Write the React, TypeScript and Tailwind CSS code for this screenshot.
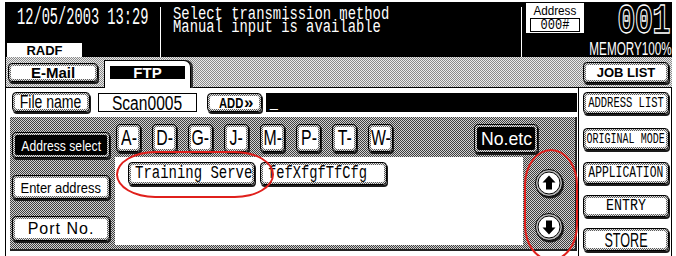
import type { ReactNode } from "react";

const BEVEL = "bg-[image:repeating-conic-gradient(#5a5a5a_0_25%,#e4e4e4_0_50%)] bg-[length:2px_2px]";
const PANEL = "bg-[image:repeating-conic-gradient(#3e3e3e_0_25%,#d2d2d2_0_50%)] bg-[length:2px_2px]";
const STRIP = "bg-[image:repeating-conic-gradient(#8a8a8a_0_25%,#ececec_0_50%)] bg-[length:2px_2px]";

function Key({ className = "", dark = false, start = false, children }: { className?: string; dark?: boolean; start?: boolean; children: ReactNode }) {
  return (
    <div className={"flex shrink-0 rounded-[4px] border border-black p-[2px] shadow-[1px_2px_0_#1a1a1a] " + BEVEL + " " + className}>
      <div
        className={
          "flex min-w-0 flex-1 items-center overflow-visible rounded-[2px] " +
          (start ? "justify-start " : "justify-center ") +
          (dark ? "bg-black text-white" : "bg-white text-black")
        }
      >
        {children}
      </div>
    </div>
  );
}

function RoundArrow({ down = false }: { down?: boolean }) {
  return (
    <svg width="31" height="31" viewBox="0 0 31 31">
      <circle cx="16" cy="16.5" r="14" fill="#1a1a1a" />
      <circle cx="15" cy="15" r="13.5" fill="#b8b8b8" stroke="black" strokeWidth="1" />
      <circle cx="15" cy="15" r="11" fill="white" stroke="black" strokeWidth="1" />
      <path
        d={down ? "M15 22.5 L21.5 15.5 H18 V8.5 H12 V15.5 H8.5 Z" : "M15 7.5 L21.5 14.5 H18 V21.5 H12 V14.5 H8.5 Z"}
        fill="black"
      />
    </svg>
  );
}

const LETTERS = ["A-", "D-", "G-", "J-", "M-", "P-", "T-", "W-"];

export default function App() {
  return (
    <div className="relative h-[256px] w-[676px] overflow-hidden bg-white pl-[5px] pt-[2px] font-['Liberation_Sans',sans-serif] text-black">
      <div className="flex h-[254px] w-[667px] flex-col">
        {/* status header */}
        <div className="flex h-[55px] shrink-0 bg-black text-white">
          <div className="flex w-[155px] flex-col justify-between">
            <div className="pl-[12px] pt-[6px] font-['Liberation_Mono',monospace] text-[24px] leading-[20px]">
              <span className="inline-block origin-left scale-x-[0.57] whitespace-nowrap">12/05/2003 13:29</span>
            </div>
            <div className="ml-[2px] flex h-[14px] w-[75px] items-center justify-center bg-white text-[13px] font-bold leading-none text-black">
              RADF
            </div>
          </div>
          <div className="mt-[5px] w-px bg-white" />
          <div className="w-[360px] pl-[12px] pt-[6px] font-['Liberation_Mono',monospace] text-[18px] leading-[13px]">
            <div>
              <span className="inline-block origin-left scale-x-[0.77] whitespace-nowrap">Select transmission method</span>
            </div>
            <div>
              <span className="inline-block origin-left scale-x-[0.77] whitespace-nowrap">Manual input is available</span>
            </div>
          </div>
          <div className="mt-[5px] w-px bg-white" />
          <div className="flex flex-1 flex-col">
            <div className="flex">
              <div className="ml-[4px] mt-[1px] flex h-[30px] w-[58px] flex-col items-center bg-white text-black">
                <div className="text-[13px] leading-[15px]">
                  <span className="inline-block scale-x-[0.9] whitespace-nowrap">Address</span>
                </div>
                <div className="flex h-[14px] w-[50px] items-center justify-center border border-black font-['Liberation_Mono',monospace] text-[15px] leading-none">
                  <span className="inline-block scale-x-[0.8]">000#</span>
                </div>
              </div>
              <div className="ml-auto mr-[2px] mt-[6px] flex h-[27px] items-center overflow-visible font-['Liberation_Mono',monospace] text-[36px] font-bold leading-[27px] text-transparent [-webkit-text-stroke:1.1px_white]">
                <span className="inline-block origin-right scale-x-[0.85] scale-y-[1.2] tracking-[-1px]">001</span>
              </div>
            </div>
            <div className="mt-[7px] text-right text-[18px] leading-[14px]">
              <span className="inline-block origin-right scale-x-[0.65] whitespace-nowrap">MEMORY100%</span>
            </div>
          </div>
        </div>

        {/* tab strip */}
        <div className={"flex h-[31px] shrink-0 items-end border-b border-l border-black " + STRIP}>
          <Key className="mb-[5px] ml-[2px] h-[19px] w-[90px]">
            <span className="text-[15px] font-bold leading-none">E-Mail</span>
          </Key>
          <div className="-mb-px ml-[6px] flex h-[28px] w-[87px] justify-center rounded-tr-[7px] border border-b-0 border-black bg-white pt-[5px] shadow-[2px_0_0_#333]">
            <div className="flex h-[13px] w-[75px] items-center justify-center bg-black text-[15px] font-bold leading-none text-white">
              FTP
            </div>
          </div>
          <Key className="mb-[4px] ml-auto mr-[3px] h-[21px] w-[86px]">
            <span className="text-[13px] font-bold leading-none">JOB LIST</span>
          </Key>
        </div>

        {/* body */}
        <div className="flex flex-1">
          <div className="flex w-[573px] flex-col border-l border-black">
            <div className="mt-[4px] flex h-[20px] pl-[6px]">
              <Key className="h-[20px] w-[78px]">
                <span className="inline-block scale-x-[0.78] whitespace-nowrap text-[18px] leading-none">File name</span>
              </Key>
              <div className="ml-[8px] mt-px flex h-[19px] w-[99px] items-center justify-center border border-black">
                <span className="inline-block scale-x-[0.78] whitespace-nowrap text-[20px] leading-none">Scan0005</span>
              </div>
              <Key className="ml-[10px] mt-px h-[19px] w-[55px]">
                <span className="inline-block scale-x-[0.8] whitespace-nowrap text-[14px] font-bold leading-none">ADD</span>
                <span className="-ml-[2px] text-[17px] font-bold leading-none">»</span>
              </Key>
              <div className="ml-[4px] mr-px mt-px flex h-[19px] flex-1 items-end bg-black pb-[3px] pl-[4px] text-[14px] leading-none text-white">
                _
              </div>
            </div>

            {/* address panel */}
            <div className={"ml-[4px] mt-[5px] flex h-[134px] w-[567px] border-b-2 border-r-2 border-[#222] " + PANEL}>
              <div className="flex w-[105px] flex-col pl-[2px]">
                <Key dark className="mt-[15px] h-[26px] w-[98px]">
                  <span className="inline-block scale-x-[0.81] whitespace-nowrap text-[15px] leading-none">Address select</span>
                </Key>
                <Key className="mt-[17px] h-[24px] w-[98px]">
                  <span className="inline-block scale-x-[0.86] whitespace-nowrap text-[15px] leading-none">Enter address</span>
                </Key>
                <Key className="mt-[17px] h-[25px] w-[98px]">
                  <span className="whitespace-nowrap text-[16px] leading-none tracking-[1px]">Port No.</span>
                </Key>
              </div>
              <div className="flex flex-1 flex-col">
                <div className="flex h-[40px] shrink-0 gap-[11px] pl-[1px] pt-[7px]">
                  {LETTERS.map((l) => (
                    <Key key={l} className="h-[28px] w-[25px]">
                      <span className="inline-block scale-x-[0.72] whitespace-nowrap text-[22px] leading-none">{l}</span>
                    </Key>
                  ))}
                  <Key dark className="ml-[70px] h-[29px] w-[64px]">
                    <span className="inline-block scale-x-[0.93] whitespace-nowrap text-[19px] leading-none">No.etc</span>
                  </Key>
                </div>
                <div className="flex flex-1">
                  <div className="flex h-[88px] w-[408px] items-start gap-[5px] bg-white pl-[13px] pt-[5px]">
                    <Key start className="h-[23px] w-[127px]">
                      <span className="ml-[4px] inline-block origin-left scale-x-[0.735] whitespace-nowrap font-['Liberation_Mono',monospace] text-[19px] leading-none">
                        Training Serve
                      </span>
                    </Key>
                    <Key start className="h-[23px] w-[127px]">
                      <span className="ml-[5px] inline-block origin-left scale-x-[0.724] whitespace-nowrap font-['Liberation_Mono',monospace] text-[19px] leading-none">
                        fefXfgfTfCfg
                      </span>
                    </Key>
                  </div>
                  <div className="flex flex-1 flex-col items-center gap-[13px] pt-[11px]">
                    <RoundArrow />
                    <RoundArrow down />
                  </div>
                </div>
              </div>
            </div>
          </div>

          {/* right column */}
          <div className="flex flex-1 flex-col border-l border-r border-black pl-[4px] pt-[4px] font-['Liberation_Mono',monospace]">
            <Key className="h-[22px] w-[86px]">
              <span className="inline-block scale-x-[0.7] whitespace-nowrap text-[15px] leading-none">ADDRESS LIST</span>
            </Key>
            <Key className="mt-[14px] h-[22px] w-[86px]">
              <span className="inline-block scale-x-[0.715] whitespace-nowrap text-[14px] leading-none">ORIGINAL MODE</span>
            </Key>
            <Key className="mt-[12px] h-[22px] w-[86px]">
              <span className="inline-block scale-x-[0.71] whitespace-nowrap text-[16px] leading-none">APPLICATION</span>
            </Key>
            <Key className="mt-[11px] h-[22px] w-[86px]">
              <span className="inline-block scale-x-[0.83] whitespace-nowrap text-[16px] leading-none">ENTRY</span>
            </Key>
            <Key className="mt-[11px] h-[23px] w-[86px]">
              <span className="inline-block scale-x-[0.6] whitespace-nowrap font-['Liberation_Sans',sans-serif] text-[21px] leading-none">STORE</span>
            </Key>
          </div>
        </div>
      </div>

      {/* red annotation marks */}
      <div className="absolute left-[116px] top-[151px] h-[47px] w-[158px] rounded-[40px/24px] border-[2.5px] border-[#e0201c]" />
      <div className="absolute left-[524px] top-[149px] h-[112px] w-[54px] rounded-[50%/32%] border-[2.5px] border-[#e0201c]" />
    </div>
  );
}
